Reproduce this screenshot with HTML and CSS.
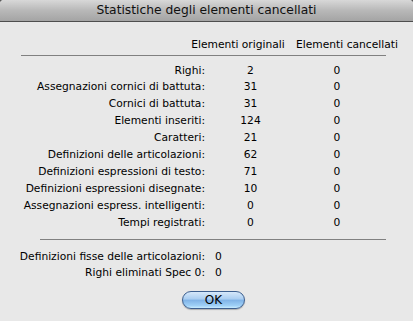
FILE: index.html
```html
<!DOCTYPE html>
<html lang="it">
<head>
<meta charset="utf-8">
<title>Statistiche degli elementi cancellati</title>
<link rel="stylesheet" href="styles.css">
</head>
<body>
<div class="dialog">
  <div class="titlebar">Statistiche degli elementi cancellati</div>
  <div class="content">
    <div class="head-row">
      <span class="h1">Elementi originali</span>
      <span class="h2">Elementi cancellati</span>
    </div>
    <div class="sep sep-top"></div>
    <div class="stats">
      <div class="lbl">Righi:</div><div class="v1">2</div><div class="v2">0</div>
      <div class="lbl">Assegnazioni cornici di battuta:</div><div class="v1">31</div><div class="v2">0</div>
      <div class="lbl">Cornici di battuta:</div><div class="v1">31</div><div class="v2">0</div>
      <div class="lbl">Elementi inseriti:</div><div class="v1">124</div><div class="v2">0</div>
      <div class="lbl">Caratteri:</div><div class="v1">21</div><div class="v2">0</div>
      <div class="lbl">Definizioni delle articolazioni:</div><div class="v1">62</div><div class="v2">0</div>
      <div class="lbl">Definizioni espressioni di testo:</div><div class="v1">71</div><div class="v2">0</div>
      <div class="lbl">Definizioni espressioni disegnate:</div><div class="v1">10</div><div class="v2">0</div>
      <div class="lbl">Assegnazioni espress. intelligenti:</div><div class="v1">0</div><div class="v2">0</div>
      <div class="lbl">Tempi registrati:</div><div class="v1">0</div><div class="v2">0</div>
    </div>
    <div class="sep sep-bottom"></div>
    <div class="extra">
      <div class="lbl">Definizioni fisse delle articolazioni:</div><div class="ev">0</div>
      <div class="lbl">Righi eliminati Spec 0:</div><div class="ev">0</div>
    </div>
    <div class="actions">
      <button class="ok" type="button">OK</button>
    </div>
  </div>
</div>
</body>
</html>
```

FILE: styles.css
```css
html, body {
  margin: 0;
  padding: 0;
}
html {
  background: #5a5a5a;
}
body {
  font-family: "DejaVu Sans", "Liberation Sans", sans-serif;
  font-size: 10.7px;
  color: #000;
}
.dialog {
  width: 413px;
  height: 321px;
  background: #e8e8e8;
  border-radius: 4px 4px 0 0;
  overflow: hidden;
  display: flex;
  flex-direction: column;
}
.titlebar {
  height: 21px;
  line-height: 21px;
  border-bottom: 1px solid #4e4e4e;
  background: linear-gradient(#d8d8d8, #b8b8b8 50%, #a4a4a4);
  text-align: center;
  font-size: 12.3px;
  color: #111;
}
.content {
  padding-top: 14px;
  display: flex;
  flex-direction: column;
}
.head-row {
  display: grid;
  grid-template-columns: 190px 96px 122px;
  line-height: 17px;
  height: 17px;
  white-space: nowrap;
}
.h1 {
  grid-column: 2;
  justify-self: center;
}
.h2 {
  grid-column: 3;
  justify-self: center;
}
.sep {
  height: 1px;
  background: #808080;
}
.sep-top {
  margin: 2px 0 0 21px;
  width: 365px;
}
.stats {
  margin-top: 6.5px;
  display: grid;
  grid-template-columns: 205px 91px 82px;
  grid-auto-rows: 16.9px;
  line-height: 16.9px;
}
.lbl {
  text-align: right;
  white-space: nowrap;
}
.v1, .v2 {
  text-align: center;
}
.sep-bottom {
  margin: 7.5px 0 0 40px;
  width: 346px;
}
.extra {
  margin-top: 9px;
  display: grid;
  grid-template-columns: 205px auto;
  column-gap: 10px;
  grid-auto-rows: 16px;
  line-height: 16px;
}
.actions {
  margin-top: 10px;
  display: flex;
  padding-left: 182px;
}
.ok {
  width: 63px;
  height: 18px;
  padding: 0;
  border: 1px solid #3d5f8f;
  border-radius: 9px;
  font-family: "DejaVu Sans", "Liberation Sans", sans-serif;
  font-size: 12px;
  line-height: 16px;
  color: #000;
  background: linear-gradient(#d6e8fa 0%, #a9cdf1 45%, #7fb2e6 50%, #9fd0f7 85%, #c8ecff 100%);
  box-shadow: 0 1px 1px rgba(0, 0, 0, 0.25);
}
```
